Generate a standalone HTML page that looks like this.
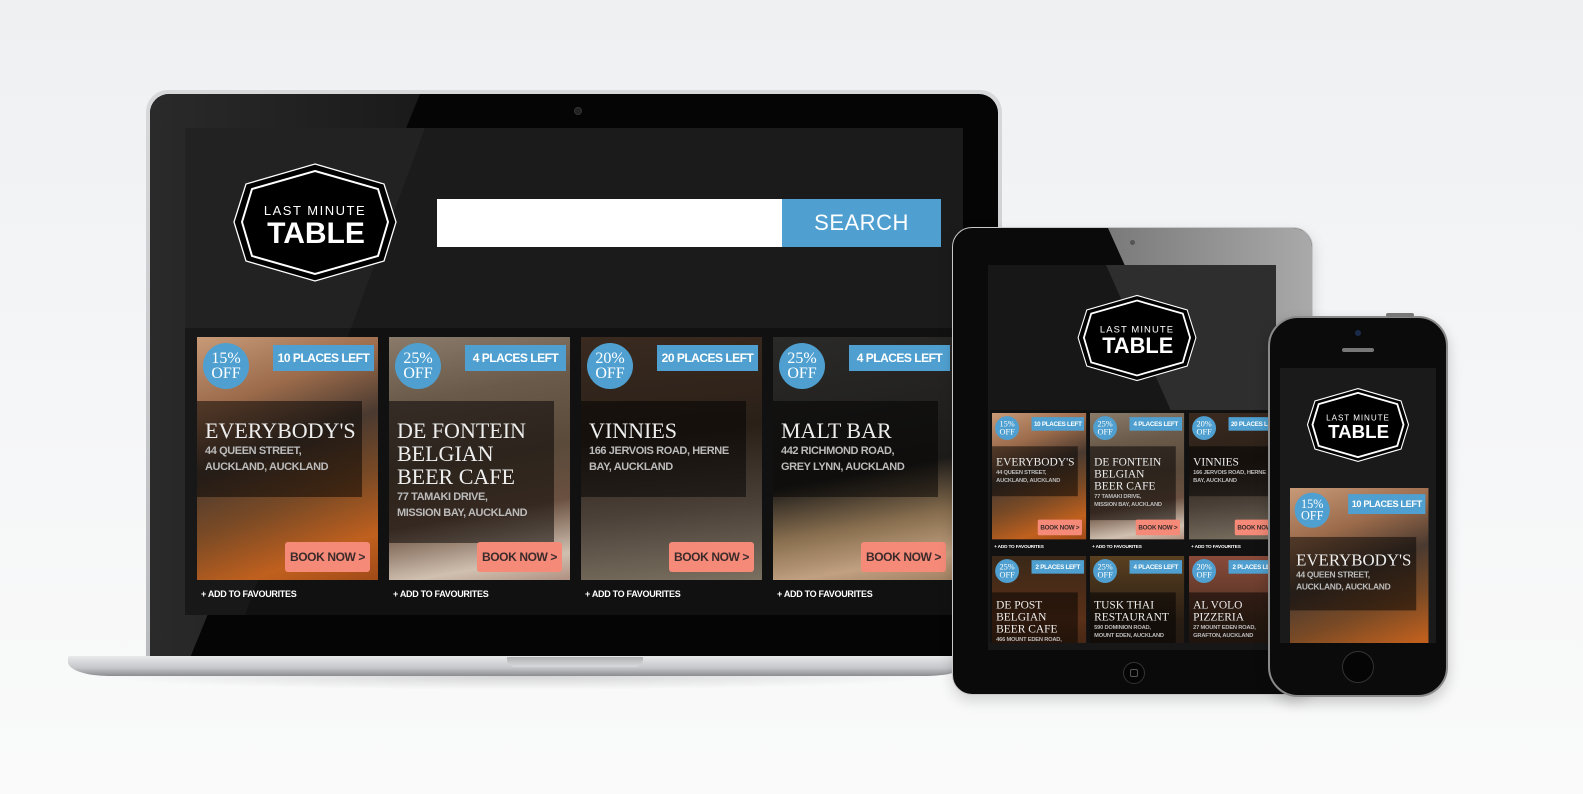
<!DOCTYPE html>
<html><head><meta charset="utf-8"><style>
*{margin:0;padding:0;box-sizing:border-box}
body{width:1583px;height:794px;overflow:hidden;position:relative;background:linear-gradient(#eef0f2,#f6f7f8 60%,#fafafa);font-family:"Liberation Sans",sans-serif}
.a{position:absolute}
.card{position:absolute;width:181px;height:270px;transform-origin:0 0}
.img{position:absolute;left:0;top:0;width:181px;height:243px;overflow:hidden}
.circ{position:absolute;left:6px;top:6px;width:46px;height:46px;border-radius:50%;background:#4fa0d0;color:#fff;font:16px/15px "Liberation Serif",serif;text-align:center;padding-top:8px}
.badge{position:absolute;left:76px;top:8px;width:101px;height:26px;background:#4fa0d0;color:#fff;font:bold 12px/26px "Liberation Sans",sans-serif;letter-spacing:-.5px;text-align:center;white-space:nowrap}
.band{position:absolute;left:0;top:64px;width:165px;height:96px;background:rgba(0,0,0,.5)}
.name{position:absolute;left:8px;top:82px;width:175px;font:22px/23px "Liberation Serif",serif;color:#eee;white-space:nowrap}
.addr{font:bold 11px/16px "Liberation Sans",sans-serif;letter-spacing:-.4px;color:#bbb;margin-top:1px}
.book{position:absolute;left:88px;top:205px;width:85px;height:30px;background:#f58a78;border-radius:3px;color:#3b2b2b;font:bold 12px/30px "Liberation Sans",sans-serif;letter-spacing:-.4px;text-align:center;white-space:nowrap}
.fav{position:absolute;left:4px;top:252px;font:bold 9px "Liberation Sans",sans-serif;letter-spacing:-.3px;color:#fff;white-space:nowrap}
.b1{background:linear-gradient(160deg,#c89a78 0%,#9a6a4a 25%,#4a3a30 45%,#7a4a25 65%,#c0601e 85%,#a04a18)}
.b2{background:linear-gradient(170deg,#8a7a6a 0%,#6a5a4a 25%,#5a4a3a 50%,#6a5040 70%,#d0c0b0 90%,#b09080)}
.b3{background:linear-gradient(175deg,#3a2a20 0%,#2a2018 40%,#4a4038 70%,#7a7060 100%)}
.b4{background:linear-gradient(170deg,#2a2a28 0%,#1e1c1a 55%,#8a7050 75%,#c0a080 90%,#a08060)}
</style></head><body>

<!-- LAPTOP -->
<div class="a" style="left:146px;top:90px;width:856px;height:572px;border-radius:22px 22px 0 0;background:linear-gradient(#d8d9db,#b8babd);"></div>
<div class="a" style="left:150px;top:94px;width:848px;height:564px;border-radius:19px 19px 0 0;background:#050505;overflow:hidden">
  <div class="a" style="left:0;top:0;width:270px;height:564px;background:linear-gradient(90deg,#2a2a2a,#1a1a1a);clip-path:polygon(0 0,270px 0,40px 564px,0 564px)"></div>
</div>
<div class="a" style="left:574px;top:107px;width:8px;height:8px;border-radius:50%;background:#222;border:1px solid #333"></div>
<div class="a" style="left:185px;top:128px;width:778px;height:487px;background:#1b1b1b;overflow:hidden">
  <div class="a" style="left:0;top:200px;width:778px;height:287px;background:#111"></div>
  <div class="a" style="left:0;top:0;width:240px;height:487px;background:rgba(255,255,255,.03);clip-path:polygon(0 0,240px 0,60px 487px,0 487px)"></div>
</div>
<svg class="a" style="left:230px;top:162px" width="170" height="121" viewBox="0 0 170 121">
<polygon points="85,2 154,22 166,60 154,99 85,119 16,99 4,60 16,22" fill="#000" stroke="#fff" stroke-width="1.3"/>
<polygon points="85,9 148,27 158,60 148,94 85,112 22,94 12,60 22,27" fill="none" stroke="#fff" stroke-width="2"/>
<text x="85" y="53" fill="#fff" font-family="Liberation Sans" font-size="13" text-anchor="middle" letter-spacing="1.5">LAST MINUTE</text>
<text x="86" y="81" fill="#fff" font-family="Liberation Sans" font-weight="bold" font-size="30" text-anchor="middle">TABLE</text>
</svg>
<div class="a" style="left:437px;top:199px;width:345px;height:48px;background:#fff"></div>
<div class="a" style="left:782px;top:199px;width:159px;height:48px;background:#4fa0d0;color:#fff;font:22px/48px 'Liberation Sans',sans-serif;text-align:center;letter-spacing:.5px">SEARCH</div>

<div class="card" style="left:197px;top:337px"><div class="img b1"></div><div class="circ">15%<br>OFF</div><div class="badge">10 PLACES LEFT</div><div class="band"></div><div class="name">EVERYBODY'S<div class="addr">44 QUEEN STREET,<br>AUCKLAND, AUCKLAND</div></div><div class="book">BOOK NOW &gt;</div><div class="fav">+ ADD TO FAVOURITES</div></div>
<div class="card" style="left:389px;top:337px"><div class="img b2"></div><div class="circ">25%<br>OFF</div><div class="badge">4 PLACES LEFT</div><div class="band" style="height:142px"></div><div class="name">DE FONTEIN<br>BELGIAN<br>BEER CAFE<div class="addr">77 TAMAKI DRIVE,<br>MISSION BAY, AUCKLAND</div></div><div class="book">BOOK NOW &gt;</div><div class="fav">+ ADD TO FAVOURITES</div></div>
<div class="card" style="left:581px;top:337px"><div class="img b3"></div><div class="circ">20%<br>OFF</div><div class="badge">20 PLACES LEFT</div><div class="band"></div><div class="name">VINNIES<div class="addr">166 JERVOIS ROAD, HERNE<br>BAY, AUCKLAND</div></div><div class="book">BOOK NOW &gt;</div><div class="fav">+ ADD TO FAVOURITES</div></div>
<div class="card" style="left:773px;top:337px"><div class="img b4"></div><div class="circ">25%<br>OFF</div><div class="badge">4 PLACES LEFT</div><div class="band"></div><div class="name">MALT BAR<div class="addr">442 RICHMOND ROAD,<br>GREY LYNN, AUCKLAND</div></div><div class="book">BOOK NOW &gt;</div><div class="fav">+ ADD TO FAVOURITES</div></div>

<div class="a" style="left:68px;top:656px;width:900px;height:20px;border-radius:2px 2px 40px 40px/2px 2px 14px 14px;background:linear-gradient(#e8e9eb,#c4c6c9 60%,#8a8c90)"></div>
<div class="a" style="left:507px;top:657px;width:136px;height:10px;border-radius:0 0 8px 8px;background:linear-gradient(#b0b2b5,#d8d9db)"></div>
<div class="a" style="left:90px;top:676px;width:860px;height:14px;background:radial-gradient(ellipse at 50% 0,rgba(0,0,0,.15),rgba(0,0,0,0) 70%)"></div>

<!-- TABLET -->
<div class="a" style="left:952px;top:227px;width:361px;height:468px;border-radius:20px;background:#0a0a0a;border:1.5px solid #c8c8c8;box-shadow:0 6px 14px rgba(0,0,0,.15);overflow:hidden">
  <div class="a" style="left:0;top:0;width:361px;height:468px;background:linear-gradient(90deg,#555,#aaa);clip-path:polygon(155px 0,361px 0,361px 300px,290px 300px)"></div>
</div>
<div class="a" style="left:1130px;top:240px;width:5px;height:5px;border-radius:50%;background:#555"></div>
<div class="a" style="left:988px;top:265px;width:288px;height:385px;background:#171717;overflow:hidden">
  <div class="a" style="left:0;top:0;width:288px;height:385px;background:rgba(255,255,255,.1);clip-path:polygon(118px 0,288px 0,288px 240px,225px 240px)"></div>
</div>
<svg class="a" style="left:1075px;top:294px" width="124" height="88" viewBox="0 0 170 121">
<polygon points="85,2 154,22 166,60 154,99 85,119 16,99 4,60 16,22" fill="#000" stroke="#fff" stroke-width="1.5"/>
<polygon points="85,9 148,27 158,60 148,94 85,112 22,94 12,60 22,27" fill="none" stroke="#fff" stroke-width="2.5"/>
<text x="85" y="53" fill="#fff" font-family="Liberation Sans" font-size="13" text-anchor="middle" letter-spacing="1.5">LAST MINUTE</text>
<text x="86" y="81" fill="#fff" font-family="Liberation Sans" font-weight="bold" font-size="30" text-anchor="middle">TABLE</text>
</svg>
<div class="a" style="left:990px;top:410px;width:278px;height:233px;overflow:hidden;background:#111">
 <div class="card" style="left:2px;top:3px;transform:scale(.52)"><div class="img b1"></div><div class="circ">15%<br>OFF</div><div class="badge">10 PLACES LEFT</div><div class="band"></div><div class="name">EVERYBODY'S<div class="addr">44 QUEEN STREET,<br>AUCKLAND, AUCKLAND</div></div><div class="book">BOOK NOW &gt;</div><div class="fav">+ ADD TO FAVOURITES</div></div>
 <div class="card" style="left:100px;top:3px;transform:scale(.52)"><div class="img b2"></div><div class="circ">25%<br>OFF</div><div class="badge">4 PLACES LEFT</div><div class="band" style="height:142px"></div><div class="name">DE FONTEIN<br>BELGIAN<br>BEER CAFE<div class="addr">77 TAMAKI DRIVE,<br>MISSION BAY, AUCKLAND</div></div><div class="book">BOOK NOW &gt;</div><div class="fav">+ ADD TO FAVOURITES</div></div>
 <div class="card" style="left:199px;top:3px;transform:scale(.52)"><div class="img b3"></div><div class="circ">20%<br>OFF</div><div class="badge">20 PLACES LEFT</div><div class="band"></div><div class="name">VINNIES<div class="addr">166 JERVOIS ROAD, HERNE<br>BAY, AUCKLAND</div></div><div class="book">BOOK NOW &gt;</div><div class="fav">+ ADD TO FAVOURITES</div></div>
 <div class="card" style="left:2px;top:146px;transform:scale(.52)"><div class="img" style="background:linear-gradient(#3a2818,#5a3018 50%,#2a1a10)"></div><div class="circ">25%<br>OFF</div><div class="badge">2 PLACES LEFT</div><div class="band" style="top:70px;height:100px"></div><div class="name">DE POST<br>BELGIAN<br>BEER CAFE<div class="addr">466 MOUNT EDEN ROAD,</div></div></div>
 <div class="card" style="left:100px;top:146px;transform:scale(.52)"><div class="img" style="background:linear-gradient(#5a4020,#2a1e14 50%,#1a1410)"></div><div class="circ">25%<br>OFF</div><div class="badge">4 PLACES LEFT</div><div class="band" style="top:70px;height:100px"></div><div class="name">TUSK THAI<br>RESTAURANT<div class="addr">590 DOMINION ROAD,<br>MOUNT EDEN, AUCKLAND</div></div></div>
 <div class="card" style="left:199px;top:146px;transform:scale(.52)"><div class="img" style="background:linear-gradient(#8a4a3a,#4a3020 50%,#2a2018)"></div><div class="circ">20%<br>OFF</div><div class="badge">2 PLACES LEFT</div><div class="band" style="top:70px;height:100px"></div><div class="name">AL VOLO<br>PIZZERIA<div class="addr">27 MOUNT EDEN ROAD,<br>GRAFTON, AUCKLAND</div></div></div>
</div>
<div class="a" style="left:1123px;top:662px;width:22px;height:22px;border-radius:50%;border:1.5px solid #333;background:#050505"></div>
<div class="a" style="left:1130px;top:669px;width:8px;height:8px;border-radius:2px;border:1px solid #555"></div>

<!-- PHONE -->
<div class="a" style="left:1268px;top:316px;width:180px;height:381px;border-radius:30px;background:#0b0b0b;border:2px solid #8a8a8a;box-shadow:0 6px 14px rgba(0,0,0,.2)"></div>
<div class="a" style="left:1386px;top:313px;width:28px;height:4px;border-radius:2px;background:#777"></div>
<div class="a" style="left:1355px;top:330px;width:6px;height:6px;border-radius:50%;background:#1a2a4a"></div>
<div class="a" style="left:1342px;top:348px;width:32px;height:4px;border-radius:2px;background:#777"></div>
<div class="a" style="left:1280px;top:368px;width:156px;height:275px;background:#1a1a1a;overflow:hidden">
 <div class="card" style="left:10px;top:120px;transform:scale(.765)"><div class="img b1"></div><div class="circ">15%<br>OFF</div><div class="badge">10 PLACES LEFT</div><div class="band"></div><div class="name">EVERYBODY'S<div class="addr">44 QUEEN STREET,<br>AUCKLAND, AUCKLAND</div></div></div>
</div>
<svg class="a" style="left:1305px;top:387px" width="106" height="76" viewBox="0 0 170 121">
<polygon points="85,2 154,22 166,60 154,99 85,119 16,99 4,60 16,22" fill="#000" stroke="#fff" stroke-width="1.8"/>
<polygon points="85,9 148,27 158,60 148,94 85,112 22,94 12,60 22,27" fill="none" stroke="#fff" stroke-width="3"/>
<text x="85" y="53" fill="#fff" font-family="Liberation Sans" font-size="13" text-anchor="middle" letter-spacing="1.5">LAST MINUTE</text>
<text x="86" y="81" fill="#fff" font-family="Liberation Sans" font-weight="bold" font-size="30" text-anchor="middle">TABLE</text>
</svg>
<div class="a" style="left:1342px;top:651px;width:32px;height:32px;border-radius:50%;border:1.5px solid #333;background:#050505"></div>
</body></html>
